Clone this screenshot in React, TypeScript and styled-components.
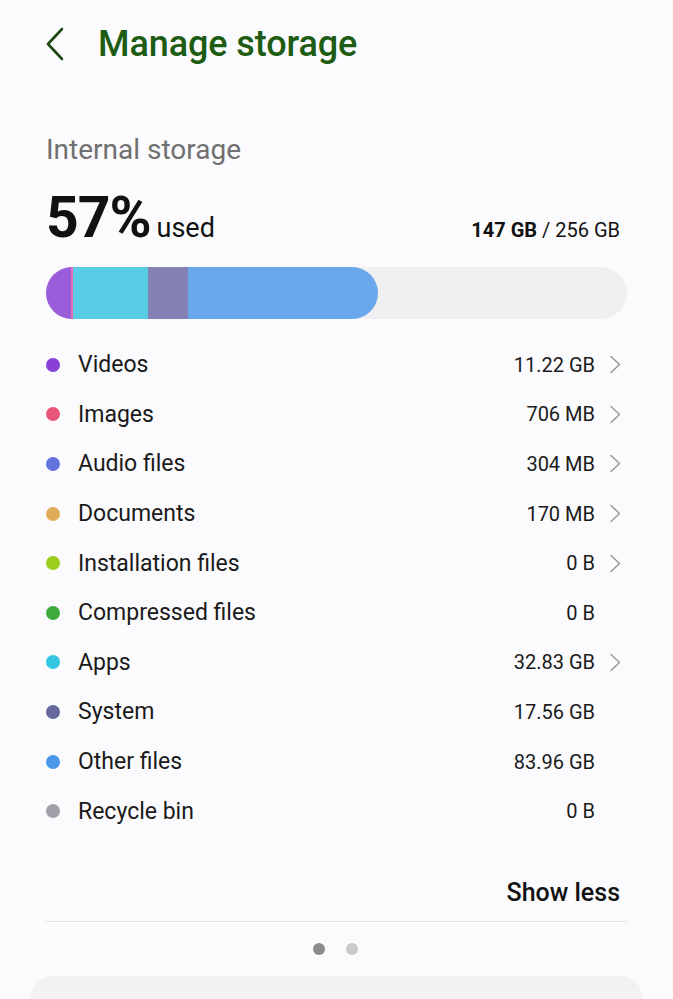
import React from 'react';
import styled, { createGlobalStyle } from 'styled-components';

const GlobalStyle = createGlobalStyle`
  html, body {
    margin: 0;
    padding: 0;
    background: #fbfbfd;
  }
  body {
    font-family: Roboto, "Noto Sans", "Liberation Sans", sans-serif;
    color: #111;
  }
`;

const Page = styled.div`
  width: 673px;
  height: 999px;
  overflow: hidden;
  display: flex;
  flex-direction: column;
`;

const Header = styled.header`
  height: 88px;
  display: flex;
  align-items: center;
  padding-left: 40px;
  gap: 28px;
`;

const BackButton = styled.button`
  border: none;
  background: none;
  padding: 0;
  width: 30px;
  height: 40px;
  display: flex;
  align-items: center;
  justify-content: center;
`;

const Title = styled.h1`
  margin: 0;
  font-size: 36px;
  font-weight: 500;
  color: #1d5c12;
  letter-spacing: -0.1px;
`;

const Content = styled.main`
  padding: 0 46px;
  display: flex;
  flex-direction: column;
`;

const SectionLabel = styled.div`
  margin-top: 44px;
  font-size: 28px;
  color: #707070;
  line-height: 36px;
`;

const UsageRow = styled.div`
  display: flex;
  align-items: baseline;
  justify-content: space-between;
  margin-top: 16px;
  height: 60px;
`;

const Percent = styled.span`
  font-size: 57px;
  font-weight: 700;
  letter-spacing: -1px;
`;

const Used = styled.span`
  font-size: 27px;
  margin-left: 6px;
`;

const Totals = styled.span`
  font-size: 20px;
  margin-right: 7px;
  b {
    font-weight: 700;
  }
`;

const Bar = styled.div`
  margin-top: 23px;
  height: 52px;
  border-radius: 26px;
  background: #f0f0f2;
  display: flex;
  overflow: hidden;
`;

const Segment = styled.div<{ $color: string; $last?: boolean }>`
  background: ${(p) => p.$color};
  height: 100%;
  ${(p) => (p.$last ? 'border-radius: 0 26px 26px 0;' : '')}
`;

const List = styled.ul`
  list-style: none;
  margin: 21px 0 0;
  padding: 0;
`;

const Row = styled.li`
  height: 49.6px;
  display: flex;
  align-items: center;
`;

const Dot = styled.span<{ $color: string }>`
  width: 14px;
  height: 14px;
  border-radius: 50%;
  background: ${(p) => p.$color};
  margin-right: 18px;
`;

const Label = styled.span`
  flex: 1;
  font-size: 23px;
  color: #1a1a1a;
`;

const Value = styled.span`
  font-size: 20px;
  color: #1a1a1a;
`;

const ChevronSlot = styled.span`
  width: 32px;
  padding-left: 14px;
  box-sizing: border-box;
  display: flex;
  align-items: center;
`;

const ShowLess = styled.div`
  margin-top: 34px;
  height: 46px;
  display: flex;
  align-items: center;
  justify-content: flex-end;
  font-size: 25px;
  font-weight: 500;
  margin-right: 7px;
`;

const Divider = styled.hr`
  margin: 5px 0 0;
  border: none;
  border-top: 1.5px solid #e2e2e4;
`;

const Pager = styled.div`
  display: flex;
  justify-content: center;
  gap: 21px;
  margin-top: 21px;
  padding-right: 2px;
`;

const PagerDot = styled.span<{ $active?: boolean }>`
  width: 12px;
  height: 12px;
  border-radius: 50%;
  background: ${(p) => (p.$active ? '#8b8b8d' : '#cacacc')};
`;

const Card = styled.div`
  margin: 21px 30px 0 30px;
  flex: 1;
  background: #f2f2f4;
  border-radius: 28px 28px 0 0;
`;

const categories = [
  { name: 'Videos', size: '11.22 GB', color: '#8b3fd6', more: true },
  { name: 'Images', size: '706 MB', color: '#e8577a', more: true },
  { name: 'Audio files', size: '304 MB', color: '#6373e0', more: true },
  { name: 'Documents', size: '170 MB', color: '#e0ac5a', more: true },
  { name: 'Installation files', size: '0 B', color: '#9ccd1a', more: true },
  { name: 'Compressed files', size: '0 B', color: '#3daa3a', more: false },
  { name: 'Apps', size: '32.83 GB', color: '#34c6e0', more: true },
  { name: 'System', size: '17.56 GB', color: '#66679d', more: false },
  { name: 'Other files', size: '83.96 GB', color: '#4b97ea', more: false },
  { name: 'Recycle bin', size: '0 B', color: '#9fa0a8', more: false },
];

const segments = [
  { w: 25, color: '#9a5cd8' },
  { w: 2, color: '#e46cb0' },
  { w: 75, color: '#58cde5' },
  { w: 40, color: '#8482b4' },
  { w: 190, color: '#69a8ec', last: true },
];

const Chevron = () => (
  <svg width="13" height="19" viewBox="0 0 13 19" fill="none">
    <path d="M2 1.5 L10.5 9.5 L2 17.5" stroke="#9a9a9e" strokeWidth="1.5" strokeLinecap="round" strokeLinejoin="round" />
  </svg>
);

const BackIcon = () => (
  <svg width="20" height="34" viewBox="0 0 20 34" fill="none">
    <path d="M17 2 L3 17 L17 32" stroke="#1d4a14" strokeWidth="2.6" strokeLinecap="round" strokeLinejoin="round" />
  </svg>
);

export default function App() {
  return (
    <Page>
      <GlobalStyle />
      <Header>
        <BackButton aria-label="Back">
          <BackIcon />
        </BackButton>
        <Title>Manage storage</Title>
      </Header>
      <Content>
        <SectionLabel>Internal storage</SectionLabel>
        <UsageRow>
          <span>
            <Percent>57%</Percent>
            <Used>used</Used>
          </span>
          <Totals>
            <b>147 GB</b> / 256 GB
          </Totals>
        </UsageRow>
        <Bar>
          {segments.map((s, i) => (
            <Segment key={i} $color={s.color} $last={s.last} style={{ width: s.w }} />
          ))}
        </Bar>
        <List>
          {categories.map((c) => (
            <Row key={c.name}>
              <Dot $color={c.color} />
              <Label>{c.name}</Label>
              <Value>{c.size}</Value>
              <ChevronSlot>{c.more && <Chevron />}</ChevronSlot>
            </Row>
          ))}
        </List>
        <ShowLess>Show less</ShowLess>
        <Divider />
        <Pager>
          <PagerDot $active />
          <PagerDot />
        </Pager>
      </Content>
      <Card />
    </Page>
  );
}
